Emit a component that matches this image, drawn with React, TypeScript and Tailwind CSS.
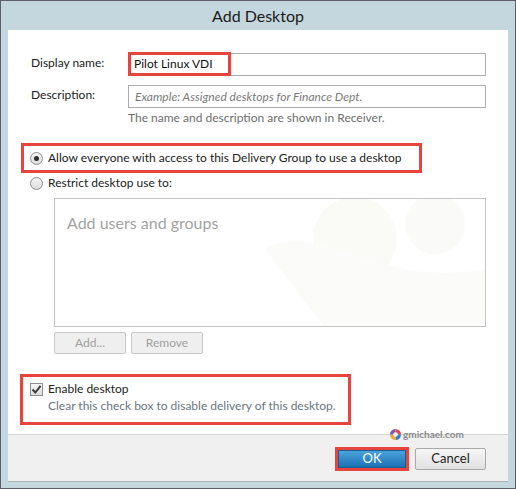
import React from "react";

const font = "font-['Lato','Open_Sans',sans-serif]";

function Radio({ checked }: { checked?: boolean }) {
  return (
    <span className="flex h-[13px] w-[13px] shrink-0 items-center justify-center rounded-full border border-[#8d8f92] bg-gradient-to-b from-[#f4f4f4] to-[#dcdcdc]">
      {checked && <span className="h-[5px] w-[5px] rounded-full bg-[#2f2f2f]" />}
    </span>
  );
}

function Checkbox() {
  return (
    <span className="flex h-[13px] w-[13px] shrink-0 items-center justify-center border border-[#8d8f92] bg-gradient-to-b from-[#f6f6f6] to-[#dedede]">
      <svg width="11" height="11" viewBox="0 0 11 11">
        <path d="M1.5 5.5 L4.3 8.5 L9.6 1.8" fill="none" stroke="#3a3a3a" strokeWidth="2" />
      </svg>
    </span>
  );
}

export default function App() {
  return (
    <div className={`${font} flex h-[489px] w-[516px] flex-col border border-[#5c606b] bg-[#c5d7de] text-[12px] text-[#222]`}>
      {/* Title bar */}
      <div className="flex h-[29px] items-center justify-center pt-[1px] text-[16px] text-[#1b1b1b]">
        Add Desktop
      </div>

      {/* Dialog body */}
      <div className="mx-[7px] flex h-[452px] flex-col border-b border-[#a9b4b9] bg-white">
        <div className="flex flex-1 flex-col pl-[23px] pr-[22px] pt-[23px]">
          {/* Display name */}
          <div className="flex items-center">
            <span className="w-[97px] pb-[3px]">Display name:</span>
            <div className="flex h-[23px] flex-1 items-center border border-[#abadb3]">
              <span className="-ml-px -mt-px flex h-[24px] w-[103px] items-center border-[3px] border-[#e6443d] pl-[3px] text-[#111]">
                Pilot Linux VDI
              </span>
            </div>
          </div>

          {/* Description */}
          <div className="mt-[9px] flex items-center">
            <span className="w-[97px] pb-[3px]">Description:</span>
            <div className="flex h-[23px] flex-1 items-center border border-[#abadb3] pl-[6px] italic text-[#7b7b7b]">
              Example: Assigned desktops for Finance Dept.
            </div>
          </div>
          <div className="ml-[97px] mt-[2px] leading-[15px] text-[#6e6e6e]">
            The name and description are shown in Receiver.
          </div>

          {/* Radio options */}
          <div className="-ml-[10px] mt-[18px] flex h-[30px] w-[401px] items-center gap-[5px] border-[3px] border-[#e6443d] pl-[6px]">
            <Radio checked />
            <span>Allow everyone with access to this Delivery Group to use a desktop</span>
          </div>
          <div className="-ml-px mt-px flex h-[18px] items-center gap-[5px]">
            <Radio />
            <span>Restrict desktop use to:</span>
          </div>

          <div className="relative ml-[23px] mt-[6px] h-[129px] overflow-hidden border border-[#c4c4c4] bg-white">
            <svg className="absolute right-0 top-0" width="280" height="129" viewBox="0 0 280 129">
              <circle cx="150" cy="40" r="42" fill="#fafbf7" />
              <circle cx="230" cy="25" r="30" fill="#fafbf8" />
              <path d="M60 50 C 110 20, 170 90, 280 70 L280 129 L120 129 Z" fill="#fbfcf9" />
            </svg>
            <div className="relative px-[12px] pt-[12px] text-[16px] text-[#a3a3a3]">Add users and groups</div>
          </div>

          <div className="ml-[23px] mt-[5px] flex gap-[5px] text-[#a0a0a0]">
            <div className="flex h-[22px] w-[72px] items-center justify-center rounded-[2px] border border-[#c9c9c9] bg-[#efefef]">
              Add...
            </div>
            <div className="flex h-[22px] w-[72px] items-center justify-center rounded-[2px] border border-[#c9c9c9] bg-[#efefef]">
              Remove
            </div>
          </div>

          {/* Enable desktop */}
          <div className="-ml-[11px] mt-[20px] flex h-[51px] w-[331px] flex-col border-[3px] border-[#e6443d] pl-[7px] pt-[4px]">
            <div className="flex items-center gap-[5px] leading-[16px]">
              <Checkbox />
              <span>Enable desktop</span>
            </div>
            <div className="ml-[18px] mt-[1px] leading-[16px] text-[#6c7680]">
              Clear this check box to disable delivery of this desktop.
            </div>
          </div>
        </div>

        {/* Footer */}
        <div className="relative flex h-[47px] items-center justify-end gap-[6px] border-t border-[#d4d4d4] bg-[#f0f0f0] pr-[22px] pt-[1px]">
          <div className="absolute left-[382px] top-[-8px] flex items-center gap-[2px]">
            <svg width="11" height="11" viewBox="0 0 12 12">
              <path d="M6 6 L6 0 A6 6 0 0 1 12 6 Z" fill="#e8493c" />
              <path d="M6 6 L12 6 A6 6 0 0 1 6 12 Z" fill="#2e7fd0" />
              <path d="M6 6 L6 12 A6 6 0 0 1 0 6 Z" fill="#f2a73b" />
              <path d="M6 6 L0 6 A6 6 0 0 1 6 0 Z" fill="#8c4bb0" />
              <circle cx="6" cy="6" r="2.5" fill="#fff" />
            </svg>
            <span className="text-[10px] font-bold text-[#8d8d8d]">gmichael.com</span>
          </div>
          <div className="flex h-[24px] w-[74px] border-[3px] border-[#e6443d]">
            <div className="flex flex-1 items-center justify-center border border-[#1a5f93] bg-gradient-to-b from-[#4aa3dc] to-[#1b72b4] text-[13px] text-white">
              OK
            </div>
          </div>
          <div className="flex h-[22px] w-[71px] items-center justify-center rounded-[2px] border border-[#a9a9a9] bg-gradient-to-b from-[#f6f6f6] to-[#e1e1e1] text-[13px] text-[#222]">
            Cancel
          </div>
        </div>
      </div>
    </div>
  );
}
